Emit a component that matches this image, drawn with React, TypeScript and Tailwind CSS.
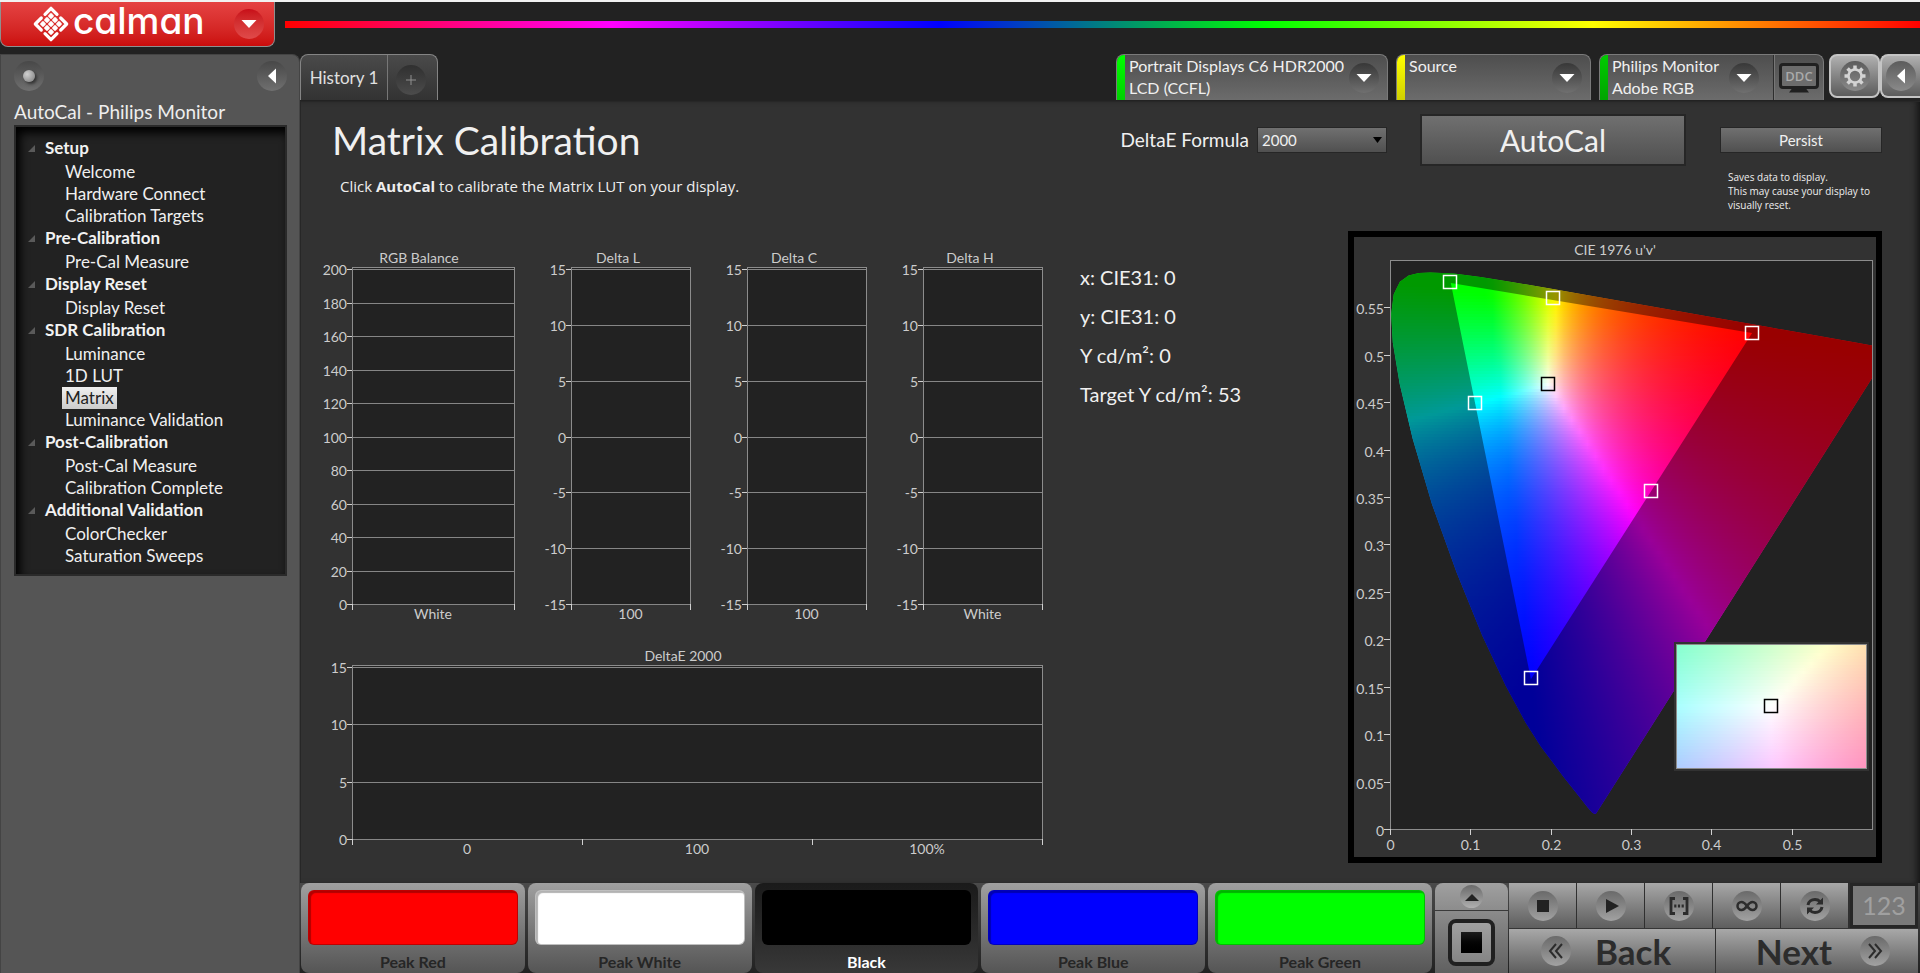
import type { ReactNode } from 'react'

const tree = [
  { title: 'Setup', items: ['Welcome', 'Hardware Connect', 'Calibration Targets'] },
  { title: 'Pre-Calibration', items: ['Pre-Cal Measure'] },
  { title: 'Display Reset', items: ['Display Reset'] },
  { title: 'SDR Calibration', items: ['Luminance', '1D LUT', 'Matrix', 'Luminance Validation'] },
  { title: 'Post-Calibration', items: ['Post-Cal Measure', 'Calibration Complete'] },
  { title: 'Additional Validation', items: ['ColorChecker', 'Saturation Sweeps'] },
]

const devices = [
  { lines: ['Portrait Displays C6 HDR2000', 'LCD (CCFL)'], bar: 'from-[#00ff00] to-[#00d000]', width: 'w-[272px]' },
  { lines: ['Source'], bar: 'from-[#ffff00] to-[#d0d000]', width: 'w-[195px]' },
]

const readings = ['x: CIE31: 0', 'y: CIE31: 0', 'Y cd/m²: 0', 'Target Y cd/m²: 53']

const swatches = [
  { name: 'Peak Red', color: 'bg-[#ff0000]' },
  { name: 'Peak White', color: 'bg-white' },
  { name: 'Black', color: 'bg-black', active: true },
  { name: 'Peak Blue', color: 'bg-[#0000ff]' },
  { name: 'Peak Green', color: 'bg-[#00ff00]' },
]

// CIE 1931 spectral locus, 380nm to 700nm
const locusXY = [
  [0.1741, 0.005], [0.1733, 0.0048], [0.1714, 0.0051], [0.1689, 0.0069], [0.1644, 0.0109],
  [0.1566, 0.0177], [0.144, 0.0297], [0.1355, 0.0399], [0.1241, 0.0578], [0.1096, 0.0868],
  [0.0913, 0.1327], [0.0687, 0.2007], [0.0454, 0.295], [0.0235, 0.4127], [0.0082, 0.5384],
  [0.0039, 0.6548], [0.0139, 0.7502], [0.0389, 0.812], [0.0743, 0.8338], [0.1142, 0.8262],
  [0.1547, 0.8059], [0.2296, 0.7543], [0.3016, 0.6923], [0.3731, 0.6245], [0.4441, 0.5547],
  [0.5125, 0.4866], [0.5752, 0.4242], [0.627, 0.3725], [0.6658, 0.334], [0.6915, 0.3083],
  [0.719, 0.2809], [0.7347, 0.2653],
]

const xyToUv = ([x, y]: number[]) => {
  const d = -2 * x + 12 * y + 3
  return [(4 * x) / d, (9 * y) / d]
}

const uvToXy = (u: number, v: number) => {
  const d = 6 * u - 16 * v + 12
  return [(9 * u) / d, (4 * v) / d]
}

const xyToColor = (x: number, y: number) => {
  const X = x / y
  const Z = (1 - x - y) / y
  const rgb = [
    3.2406 * X - 1.5372 - 0.4986 * Z,
    -0.9689 * X + 1.8758 + 0.0415 * Z,
    0.0557 * X - 0.204 + 1.057 * Z,
  ].map((c) => Math.max(0, c))
  const peak = Math.max(...rgb)
  return `rgb(${rgb.map((c) => Math.round((255 * c) / peak)).join(',')})`
}

interface FieldProps {
  id: string
  width: number
  height: number
  colorAt: (fx: number, fy: number) => string
}

// Fills a box with thin horizontal gradient strips
const ColorField = ({ id, width, height, colorAt }: FieldProps) => {
  const step = 3
  const rows = Math.ceil(height / step)
  const cols = Math.ceil(width / 8)
  return (
    <g shapeRendering="crispEdges">
      {Array.from({ length: rows }, (_, r) => (
        <g key={r}>
          <linearGradient id={`${id}-${r}`}>
            {Array.from({ length: cols + 1 }, (_, c) => (
              <stop key={c} offset={c / cols} stopColor={colorAt(c / cols, 1 - ((r + 0.5) * step) / height)} />
            ))}
          </linearGradient>
          <rect x={0} y={r * step} width={width} height={Math.min(step, height - r * step)} fill={`url(#${id}-${r})`} />
        </g>
      ))}
    </g>
  )
}

interface ChartProps {
  title: string
  width: number
  left: number
  plotHeight: number
  ticks: number[]
  labels: string[]
}

const Chart = ({ title, width, left, plotHeight, ticks, labels }: ChartProps) => {
  const top = 19
  const bottom = top + plotHeight
  const right = width - 1
  const step = (plotHeight - 2) / (ticks.length - 1)
  const band = (right - left) / labels.length
  return (
    <svg viewBox={`0 0 ${width} ${bottom + 20}`} width={width} height={bottom + 20} className="block shrink-0 overflow-visible text-[14px]" fill="#cccccc">
      <text x={width / 2} y={15} textAnchor="middle">{title}</text>
      <rect x={left + 0.5} y={top + 0.5} width={right - left} height={plotHeight} fill="#222222" stroke="#8c8c8c" />
      {ticks.map((tick, i) => {
        const y = Math.round(top + 2 + i * step) + 0.5
        return (
          <g key={tick}>
            <line x1={left} x2={right} y1={y} y2={y} stroke="#868686" />
            <line x1={left - 5} x2={left} y1={y} y2={y} stroke="#d0d0d0" />
            <text x={left - 5} y={y + 5} textAnchor="end">{tick}</text>
          </g>
        )
      })}
      {[...labels, ''].map((label, i) => (
        <g key={i}>
          <line x1={Math.round(left + i * band) + 0.5} x2={Math.round(left + i * band) + 0.5} y1={bottom} y2={bottom + 6} stroke="#d0d0d0" />
          <text x={left + (i + 0.5) * band} y={bottom + 15} textAnchor="middle">{label}</text>
        </g>
      ))}
    </svg>
  )
}

const PLOT_W = 482
const PLOT_H = 569
const px = (u: number) => (u / 0.6) * PLOT_W
const py = (v: number) => PLOT_H - (v / 0.6) * PLOT_H
const toPath = (pts: number[][]) => `M${pts.map(([u, v]) => `${px(u).toFixed(1)} ${py(v).toFixed(1)}`).join('L')}Z`

const locus = toPath(locusXY.map(xyToUv))
const gamut = toPath([[0.0757, 0.5757], [0.4507, 0.5229], [0.1754, 0.1579]])
const targets = [[0.0750, 0.5765], [0.2035, 0.56], [0.4507, 0.5235], [0.1055, 0.4495], [0.325, 0.3565], [0.176, 0.159]]

const Marker = ({ x, y, color }: { x: number; y: number; color: string }) => (
  <rect x={Math.round(x) - 6.5} y={Math.round(y) - 6.5} width={13} height={13} fill="none" stroke={color} strokeWidth={1.5} />
)

const CieChart = () => (
  <svg viewBox="0 0 522 620" className="block w-full text-[14px]" fill="#cccccc">
    <defs>
      <clipPath id="plot"><rect width={PLOT_W} height={PLOT_H} /></clipPath>
      <clipPath id="locus"><path d={locus} /></clipPath>
    </defs>
    <text x={261} y={18} textAnchor="middle">CIE 1976 u'v'</text>
    <g transform="translate(36 23)">
      <rect width={PLOT_W} height={PLOT_H} fill="#222222" />
      <g clipPath="url(#plot)">
        <g clipPath="url(#locus)">
          <ColorField
            id="uv"
            width={PLOT_W}
            height={PLOT_H}
            colorAt={(fx, fy) => {
              const [x, y] = uvToXy(fx * 0.6, fy * 0.6)
              return xyToColor(x, y)
            }}
          />
          <path d={`${locus}${gamut}`} fillRule="evenodd" fill="#000" opacity={0.4} />
        </g>
      </g>
      <rect x={0.5} y={0.5} width={PLOT_W} height={PLOT_H} fill="none" stroke="#8c8c8c" />
      {targets.map(([u, v]) => (
        <Marker key={u} x={px(u)} y={py(v)} color="#fff" />
      ))}
      <Marker x={px(0.1965)} y={py(0.4695)} color="#000" />
      {Array.from({ length: 12 }, (_, i) => {
        const y = Math.round(py(i * 0.05)) + 0.5
        return (
          <g key={i}>
            <line x1={-6} x2={0} y1={y} y2={y} stroke="#d0d0d0" />
            <text x={-6} y={y + 6} textAnchor="end">{Number((i * 0.05).toFixed(2))}</text>
          </g>
        )
      })}
      {Array.from({ length: 6 }, (_, i) => {
        const x = Math.round(px(i * 0.1)) + 0.5
        return (
          <g key={i}>
            <line x1={x} x2={x} y1={PLOT_H} y2={PLOT_H + 6} stroke="#d0d0d0" />
            <text x={x} y={PLOT_H + 21} textAnchor="middle">{Number((i * 0.1).toFixed(1))}</text>
          </g>
        )
      })}
      {/* white point close-up, in xy */}
      <g transform="translate(286 384)">
        <rect x={-2} y={-2} width={195} height={129} fill="#323232" />
        <ColorField id="xy" width={191} height={125} colorAt={(fx, fy) => xyToColor(0.2877 + fx * 0.05, 0.304 + fy * 0.05)} />
        <rect x={0.5} y={0.5} width={190} height={124} fill="none" stroke="#8c8c8c" />
        <Marker x={95} y={62} color="#000" />
      </g>
    </g>
  </svg>
)

const Logo = () => (
  <svg viewBox="-18 -18 36 36" className="size-9" fill="none" stroke="#fff" strokeWidth={3.2} strokeLinecap="round" strokeLinejoin="round">
    <path d="M-6 -9.700L0 -15.700L6 -9.700M9.700 -6L15.700 0L9.700 6M6 9.700L0 15.700L-6 9.700M-9.700 6L-15.700 0L-9.700 -6" />
    <g fill="#fff" stroke="none">
      {[[0, -8], [-4, -4], [4, -4], [-8, 0], [0, 0], [8, 0], [-4, 4], [4, 4], [0, 8]].map(([x, y]) => (
        <rect key={`${x},${y}`} x={-2.4} y={-2.4} width={4.8} height={4.8} rx={1.2} transform={`translate(${x} ${y}) rotate(45)`} />
      ))}
    </g>
  </svg>
)

const Triangle = ({ points, className = 'fill-white' }: { points: string; className?: string }) => (
  <svg viewBox="0 0 16 16" className={`size-4 ${className}`}>
    <polygon points={points} />
  </svg>
)

const DOWN = '0.5,4 15.5,4 8,12'
const LEFT = '12,0.5 12,15.5 4,8'

const Round = ({ children, className = 'from-[#383838] to-[#707070]' }: { children?: ReactNode; className?: string }) => (
  <span className={`flex size-[30px] shrink-0 items-center justify-center rounded-full bg-gradient-to-b ${className}`}>{children}</span>
)

const Knob = ({ children }: { children: ReactNode }) => (
  <Round className="from-[#6a6a6a] to-[#a2a2a2]">
    <svg viewBox="0 0 24 24" className="size-6" fill="none" stroke="#2c2c2c" strokeWidth={2}>{children}</svg>
  </Round>
)

const transport = [
  { name: 'Stop', icon: <rect x={6} y={6} width={12} height={12} fill="#222" stroke="none" /> },
  { name: 'Play', icon: <polygon points="7,5 20,12 7,19" fill="#222" stroke="none" /> },
  { name: 'Read series', icon: <path d="M8 4.500H4V19.500H8M16 4.500H20V19.500H16M7.200 12H9.400M10.900 12H13.100M14.600 12H16.800" strokeWidth={2.800} /> },
  { name: 'Continuous', icon: <path d="M12 12C9.500 8.500 8.500 8 6.500 8A4 4 0 0 0 6.500 16C8.500 16 9.500 15.500 12 12C14.500 8.500 15.500 8 17.500 8A4 4 0 0 1 17.500 16C15.500 16 14.500 15.500 12 12Z" strokeWidth={2.500} /> },
  {
    name: 'Refresh',
    icon: (
      <>
        <path d="M5 11C5.500 7.500 8.500 5.500 12 5.500C14 5.500 15.500 6 17 7.500M19 13C18.500 16.500 15.500 18.500 12 18.500C10 18.500 8.500 18 7 16.500" strokeWidth={3} />
        <path d="M20 3.500V10.500H13ZM4 20.500V13.500H11Z" fill="#2c2c2c" stroke="none" />
      </>
    ),
  },
]

const Header = () => (
  <header className="flex h-[54px] items-start border-t-2 border-[#f2f2f2] bg-[#222222]">
    <button className="flex h-[45px] w-[275px] items-center rounded-b-lg border border-t-0 border-[#8f8f8f] bg-gradient-to-b from-[#e54242] to-[#cb0b0b] pr-2.5 pl-8" aria-label="calman menu">
      <Logo />
      <span className="pb-1.5 pl-1 font-['Inter',sans-serif] text-[37px] leading-9 font-medium text-white [font-feature-settings:'cv11']">calman</span>
      <Round className="ml-auto from-[#c80c18] to-[#e04a4a]">
        <Triangle points={DOWN} />
      </Round>
    </button>
    <div className="mt-[19px] ml-2.5 h-[7px] flex-1 bg-[linear-gradient(to_right,#f00,#f0f_20%,#00f_40%,#0f0_60%,#ff0_80%,#f00)]" />
  </header>
)

const Sidebar = () => (
  <aside className="w-[300px] shrink-0 rounded-tr-lg border-t border-r border-l border-[#444] bg-[#555555] pr-3 pl-[13px]">
    <div className="flex justify-between pt-1.5">
      <Round className="from-[#484848] to-[#707070]">
        <span className="size-3 rounded-full bg-[radial-gradient(circle_at_35%_35%,#d0d0d0,#7a7a7a)] shadow-[2px_2px_3px_#333]" />
      </Round>
      <button aria-label="Collapse sidebar">
        <Round className="from-[#484848] to-[#707070]">
          <Triangle points={LEFT} />
        </Round>
      </button>
    </div>
    <h2 className="mt-2 text-[19px] leading-[26px] text-[#eeeeee]">AutoCal - Philips Monitor</h2>
    <nav className="border-2 border-[#2a2a2a] bg-[#222222] pt-2.5 pb-[7px] pl-3 shadow-[inset_4px_6px_10px_#000000]">
      <ul>
        {tree.map((group) => (
          <li key={group.title}>
            <div className="flex h-6 items-start text-[17px] leading-[22px] font-bold text-[#f2f2f2]">
              <svg viewBox="0 0 8 8" className="mt-2 mr-2.5 size-[7px] fill-[#5a5a5a]">
                <polygon points="8,0 8,8 0,8" />
              </svg>
              {group.title}
            </div>
            <ul className="pl-[34px]">
              {group.items.map((item) => (
                <li key={item} className="flex h-[22px]">
                  <a
                    href="#"
                    className={`px-[3px] text-[17px] leading-[22px] ${item === 'Matrix' ? 'bg-gradient-to-b from-[#f0f0f0] to-[#cccccc] text-[#222222]' : 'text-[#f0f0f0]'}`}
                  >
                    {item}
                  </a>
                </li>
              ))}
            </ul>
          </li>
        ))}
      </ul>
    </nav>
  </aside>
)

const TAB = 'border border-b-0 border-[#7a7a7a] bg-gradient-to-b from-[#4e4e4e] to-[#6c6c6c]'

const TopTabs = () => (
  <div className="flex h-[47px] items-start bg-[#222222]">
    <div className="flex h-[46px] rounded-t-lg border border-b-0 border-[#848484] bg-gradient-to-b from-[#4a4a4a] to-[#333333]">
      <button className="w-[87px] border-r border-[#777] text-[17px] text-[#e0e0e0]">History 1</button>
      <button className="w-[49px] pl-2" aria-label="Add history">
        <Round className="mt-1 from-[#303030] to-[#4c4c4c]">
          <svg viewBox="0 0 10 10" className="size-2.5" stroke="#909090"><path d="M5 0V10M0 5H10" /></svg>
        </Round>
      </button>
    </div>
    <div className="ml-auto flex gap-2">
      {devices.map((d) => (
        <button key={d.lines[0]} className={`flex h-[46px] ${d.width} items-center overflow-hidden rounded-t-lg pr-2 text-left ${TAB}`}>
          <span className={`h-full w-2 shrink-0 bg-gradient-to-b ${d.bar}`} />
          <span className="h-full flex-1 pl-1 text-base leading-[22px] whitespace-nowrap text-[#f0f0f0]">
            {d.lines.map((line) => (
              <span key={line} className="block">{line}</span>
            ))}
          </span>
          <Round><Triangle points={DOWN} /></Round>
        </button>
      ))}
      <div className={`flex h-[46px] w-[225px] overflow-hidden rounded-t-lg ${TAB}`}>
        <button className="flex flex-1 items-center border-r border-[#2e2e2e] pr-3.5 text-left">
          <span className="h-full w-2 shrink-0 bg-gradient-to-b from-[#00cc00] to-[#00a400]" />
          <span className="h-full flex-1 pl-1 text-base leading-[22px] whitespace-nowrap text-[#f0f0f0]">
            <span className="block">Philips Monitor</span>
            <span className="block">Adobe RGB</span>
          </span>
          <Round><Triangle points={DOWN} /></Round>
        </button>
        <button className="flex w-[49px] items-center justify-center border-l border-[#777]" aria-label="DDC">
          <svg viewBox="0 0 40 30" className="h-[30px] w-10">
            <rect x={1.5} y={1.5} width={37} height={23} rx={2.5} fill="#6c6c6c" stroke="#202020" strokeWidth={3} />
            <path d="M13 25.500H27L30 29.500H10Z" fill="#202020" />
            <text x={20} y={17.500} textAnchor="middle" fontSize={13} fontFamily="Open Sans" fontWeight={600} fill="#aaaaaa">DDC</text>
          </svg>
        </button>
      </div>
    </div>
    <button className="ml-[5px] flex h-11 w-[51px] items-center justify-center rounded-lg border-2 border-[#c4c4c4] bg-gradient-to-b from-[#b0b0b0] to-[#5c5c5c]" aria-label="Settings">
      <Round className="from-[#5c5c5c] to-[#8a8a8a]">
        <svg viewBox="-12 -12 24 24" className="size-6" fill="none" stroke="#d4d4d4">
          <circle r={6.5} strokeWidth={2.500} />
          {[0, 45, 90, 135, 180, 225, 270, 315].map((a) => (
            <path key={a} d="M0 -7V-10.500" strokeWidth={3.500} transform={`rotate(${a})`} />
          ))}
        </svg>
      </Round>
    </button>
    <button className="flex h-11 w-10 items-center rounded-l-lg border-2 border-r-0 border-[#c4c4c4] bg-gradient-to-b from-[#b0b0b0] to-[#5c5c5c] pl-1" aria-label="Show panel">
      <Round className="from-[#5c5c5c] to-[#8a8a8a]"><Triangle points={LEFT} /></Round>
    </button>
  </div>
)

const GREY_BUTTON = 'border-[#262626] bg-gradient-to-b from-[#707070] to-[#505050] text-[#f0f0f0]'
const deltaTicks = [15, 10, 5, 0, -5, -10, -15]

const Workspace = () => (
  <main className="flex flex-1 flex-col border-t border-l border-[#272727] bg-[#323232] pb-5 shadow-[inset_-6px_0_6px_-3px_#151515]">
    <div className="flex items-start pr-[38px] pl-[31px]">
      <div className="flex-1">
        <h1 className="pt-3 text-[39px] leading-[52px] text-[#f0f0f0]">Matrix Calibration</h1>
        <p className="mt-[7px] pl-2 font-['Open_Sans',sans-serif] text-[15px] leading-[26px] text-[#eeeeee]">
          Click <b>AutoCal</b> to calibrate the Matrix LUT on your display.
        </p>
      </div>
      <div className="mt-[25px] flex items-center gap-2">
        <label htmlFor="formula" className="text-[19px] leading-[26px] text-[#f0f0f0]">DeltaE Formula</label>
        <div className="relative">
          <select id="formula" className={`block h-[26px] w-[130px] appearance-none border px-1 text-[15px] ${GREY_BUTTON}`}>
            <option>2000</option>
          </select>
          <Triangle points="4,5 13,5 8.5,11" className="pointer-events-none absolute top-[5px] right-0.5 fill-black" />
        </div>
      </div>
      <button className={`mt-3 ml-[33px] h-[52px] w-[266px] border-2 text-3xl ${GREY_BUTTON}`}>AutoCal</button>
      <div className="mt-[25px] ml-[34px]">
        <button className={`block h-[26px] w-[162px] border text-[15px] ${GREY_BUTTON}`}>Persist</button>
        <p className="mt-[17px] pl-2 font-['Open_Sans',sans-serif] text-[10px] leading-[14px] whitespace-nowrap text-[#eeeeee]">
          Saves data to display.<br />This may cause your display to<br />visually reset.
        </p>
      </div>
    </div>

    <div className="flex items-start pr-[38px] pl-[22px]">
      <div className="mt-9">
        <div className="flex gap-[30px]">
          <Chart title="RGB Balance" width={192} left={29} plotHeight={337} ticks={[200, 180, 160, 140, 120, 100, 80, 60, 40, 20, 0]} labels={['White']} />
          <Chart title="Delta L" width={146} left={26} plotHeight={337} ticks={deltaTicks} labels={['100']} />
          <Chart title="Delta C" width={146} left={26} plotHeight={337} ticks={deltaTicks} labels={['100']} />
          <Chart title="Delta H" width={146} left={26} plotHeight={337} ticks={deltaTicks} labels={['White']} />
        </div>
        <div className="mt-[22px]">
          <Chart title="DeltaE 2000" width={720} left={29} plotHeight={174} ticks={[15, 10, 5, 0]} labels={['0', '100', '100%']} />
        </div>
      </div>
      <ul className="mt-[52px] ml-[37px] flex flex-1 flex-col gap-[13px] text-xl leading-[26px] text-[#f0f0f0]">
        {readings.map((reading) => (
          <li key={reading}>{reading}</li>
        ))}
      </ul>
      <div className="mt-[19px] w-[534px] border-6 border-black">
        <CieChart />
      </div>
    </div>
  </main>
)

const CONTROL = 'bg-gradient-to-b from-[#a8a8a8] to-[#5e5e5e]'

const BottomBar = () => (
  <footer className="flex h-[90px] gap-[3px] bg-gradient-to-b from-[#4a4a4a] to-[#222222] pr-0.5 pl-px">
    <div className="flex flex-1 gap-[3px]">
      {swatches.map((s) => (
        <button
          key={s.name}
          className={`flex flex-1 flex-col rounded-lg bg-gradient-to-b px-[7px] pt-[7px] ${s.active ? 'from-[#1a1a1a] to-[#383838] text-white' : 'from-[#a0a0a0] to-[#555555] text-[#262626]'}`}
        >
          <span className={`h-[55px] w-full rounded-md border border-black/25 shadow-[inset_2px_2px_1px_rgba(0,0,0,0.3)] ${s.color}`} />
          <span className="mt-1.5 w-full text-center text-base leading-[22px] font-bold">{s.name}</span>
        </button>
      ))}
    </div>
    <div className="flex gap-px">
      <div className="flex w-[73px] flex-col overflow-hidden rounded-t-lg bg-gradient-to-b from-[#a0a0a0] to-[#606060]">
        <button className="flex h-7 items-center justify-center border-b border-[#3a3a3a]" aria-label="Expand">
          <span className="flex size-[23px] items-center justify-center rounded-full bg-gradient-to-b from-[#6a6a6a] to-[#b0b0b0]">
            <Triangle points="1,12 15,12 8,5" className="fill-[#222]" />
          </span>
        </button>
        <button className="flex flex-1 items-center justify-center" aria-label="Pattern window">
          <span className="flex size-[47px] items-center justify-center rounded-lg border-4 border-[#202020] bg-gradient-to-b from-[#a0a0a0] to-[#858585]">
            <span className="size-[21px] bg-gradient-to-b from-[#1c1c1c] to-black" />
          </span>
        </button>
      </div>
      <div className="flex flex-col gap-px">
        <div className="flex h-[45px] gap-px bg-[#303030]">
          {transport.map((t) => (
            <button key={t.name} aria-label={t.name} className={`flex w-[67px] items-center justify-center ${CONTROL}`}>
              <Knob>{t.icon}</Knob>
            </button>
          ))}
          <div className="ml-px flex w-[68px] items-center justify-center border-[3px] border-[#262626] bg-[#7a7a7a] text-[25px] text-[#a0a0a0]">123</div>
        </div>
        <div className="flex h-11 gap-px bg-[#303030]">
          <button className={`flex flex-1 items-center gap-6 pl-8 text-[35px] leading-10 font-bold text-[#2c2c2c] ${CONTROL}`}>
            <Knob><path d="M12 5L6 12L12 19M18 5L12 12L18 19" /></Knob>
            Back
          </button>
          <button className={`flex flex-1 items-center justify-end gap-7 pr-7 text-[35px] leading-10 font-bold text-[#2c2c2c] ${CONTROL}`}>
            Next
            <Knob><path d="M6 5L12 12L6 19M12 5L18 12L12 19" /></Knob>
          </button>
        </div>
      </div>
    </div>
  </footer>
)

const App = () => {
  return (
    <div className="flex min-h-screen flex-col bg-[#222222] font-['Lato','Open_Sans',sans-serif]">
      <Header />
      <div className="flex flex-1">
        <Sidebar />
        <div className="flex min-w-0 flex-1 flex-col">
          <TopTabs />
          <Workspace />
          <BottomBar />
        </div>
      </div>
    </div>
  )
}

export default App
